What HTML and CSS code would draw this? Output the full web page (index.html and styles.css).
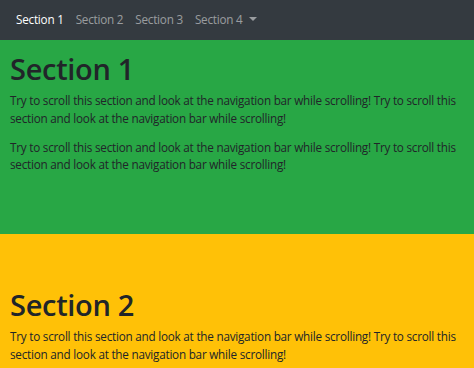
FILE: index.html
```html
<!DOCTYPE html>
<html>
<head>
<meta charset="utf-8">
<link rel="stylesheet" href="styles.css">
</head>
<body>
<nav class="navbar">
  <a class="nav-link active" href="#section1">Section 1</a>
  <a class="nav-link" href="#section2">Section 2</a>
  <a class="nav-link" href="#section3">Section 3</a>
  <a class="nav-link dropdown-toggle" href="#">Section 4</a>
</nav>
<div class="section green" id="section1">
  <h1>Section 1</h1>
  <p>Try to scroll this section and look at the navigation bar while scrolling! Try to scroll this section and look at the navigation bar while scrolling!</p>
  <p>Try to scroll this section and look at the navigation bar while scrolling! Try to scroll this section and look at the navigation bar while scrolling!</p>
</div>
<div class="section yellow" id="section2">
  <h1>Section 2</h1>
  <p>Try to scroll this section and look at the navigation bar while scrolling! Try to scroll this section and look at the navigation bar while scrolling!</p>
</div>
</body>
</html>
```
FILE: styles.css
```css
html, body {
  margin: 0;
  padding: 0;
}
body {
  font-family: "Open Sans", "Noto Sans", sans-serif;
  font-size: 11.7px;
  line-height: 17.5px;
  letter-spacing: -0.22px;
  color: #212529;
  overflow: hidden;
}
.navbar {
  position: fixed;
  top: 0;
  left: 0;
  right: 0;
  height: 40px;
  box-sizing: border-box;
  background: #343a40;
  display: flex;
  align-items: center;
  padding: 0 10px;
  z-index: 10;
}
.nav-link {
  color: rgba(255, 255, 255, 0.5);
  text-decoration: none;
  padding: 0 6px;
}
.nav-link.active {
  color: #fff;
}
.dropdown-toggle::after {
  content: "";
  display: inline-block;
  margin-left: 6px;
  vertical-align: 3px;
  border-top: 4px solid;
  border-left: 4px solid transparent;
  border-right: 4px solid transparent;
}
.section {
  padding: 51px 10px 49px;
}
.green { background: #28a745; }
.yellow { background: #ffc107; }
h1 {
  font-size: 29px;
  font-weight: 600;
  letter-spacing: -0.3px;
  line-height: 35px;
  margin: 0 0 6px;
}
.yellow h1 {
  margin-top: 2px;
}
p {
  margin: 0 0 11.7px;
}
```
